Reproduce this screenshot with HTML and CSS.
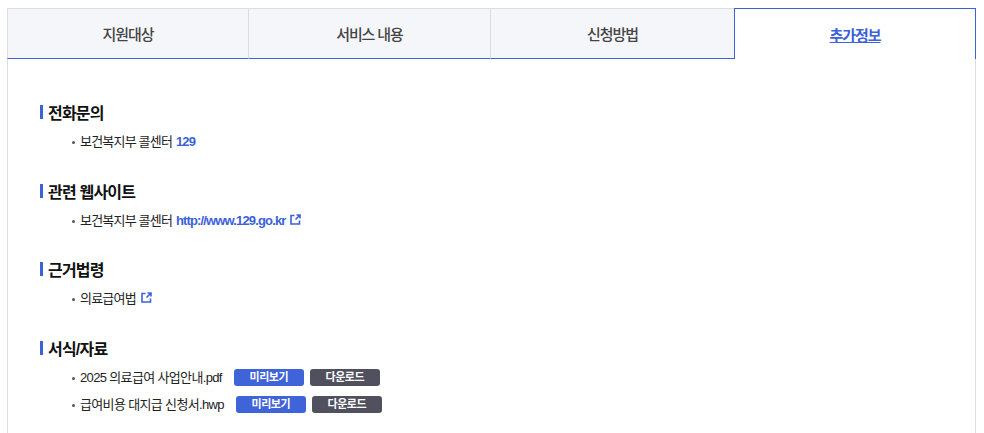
FILE: index.html
```html
<!DOCTYPE html>
<html lang="ko">
<head>
    <meta charset="UTF-8">
    <title>추가정보</title>
    <link rel="stylesheet" href="styles.css">
</head>
<body>
    <div class="container">
        <ul class="tabs">
            <li class="tab">지원대상</li>
            <li class="tab">서비스 내용</li>
            <li class="tab">신청방법</li>
            <li class="tab active"><a href="#">추가정보</a></li>
        </ul>
        <div class="panel">
            <h3>전화문의</h3>
            <ul class="items">
                <li>보건복지부 콜센터 <a class="link" href="#">129</a></li>
            </ul>

            <h3>관련 웹사이트</h3>
            <ul class="items">
                <li>보건복지부 콜센터 <a class="link" href="#">http://www.129.go.kr</a>
                    <svg class="ext" viewBox="0 0 11 11"><path d="M4.500 1.500H1v8.500h8.500V6.500M6.500 1H10v3.500M10 1 5.500 5.500"/></svg>
                </li>
            </ul>

            <h3>근거법령</h3>
            <ul class="items">
                <li>의료급여법
                    <svg class="ext" viewBox="0 0 11 11"><path d="M4.500 1.500H1v8.500h8.500V6.500M6.500 1H10v3.500M10 1 5.500 5.500"/></svg>
                </li>
            </ul>

            <h3>서식/자료</h3>
            <ul class="items files">
                <li>2025 의료급여 사업안내.pdf <span class="btn btn-view">미리보기</span><span class="btn btn-down">다운로드</span></li>
                <li>급여비용 대지급 신청서.hwp <span class="btn btn-view">미리보기</span><span class="btn btn-down">다운로드</span></li>
            </ul>
        </div>
    </div>
</body>
</html>
```

FILE: styles.css
```css
* {
    box-sizing: border-box;
}
html, body {
    height: 433px;
    overflow: hidden;
}
body {
    margin: 0;
    padding: 8px 8px 0 7px;
    background: #fff;
    color: #222;
    font-family: "Liberation Sans", "Noto Sans CJK KR", sans-serif;
    font-size: 13px;
    letter-spacing: -0.8px;
}
ul {
    list-style: none;
    margin: 0;
    padding: 0;
}
.tabs {
    display: grid;
    grid-template-columns: 241px 242px 244px 242px;
    height: 51px;
}
.tab {
    display: flex;
    align-items: center;
    justify-content: center;
    background: #f5f6fa;
    border-top: 1px solid #ddd;
    border-left: 1px solid #ddd;
    border-bottom: 1px solid #3b62d9;
    color: #444;
    font-size: 15px;
    font-weight: 500;
    letter-spacing: -1.1px;
}
.tab.active {
    background: #fff;
    border: 1px solid #3b62d9;
    border-bottom: none;
}
.tab.active a {
    color: #3b62d9;
    font-weight: 700;
}
.panel {
    height: 374px;
    padding: 43px 32px 0 32px;
    border-left: 1px solid #ddd;
    border-right: 1px solid #ddd;
}
h3 {
    position: relative;
    margin: 0 0 6px;
    padding-left: 8px;
    height: 20px;
    color: #111;
    font-size: 16px;
    font-weight: 700;
    line-height: 23px;
    letter-spacing: -0.8px;
}
h3::before {
    content: "";
    position: absolute;
    left: 0;
    top: 3px;
    width: 3px;
    height: 14px;
    background: #3b62d9;
}
.items {
    margin-bottom: 25.67px;
    padding-left: 40px;
}
.items li {
    position: relative;
    height: 27px;
    line-height: 27px;
}
.items.files li {
    letter-spacing: -0.65px;
}
.items li::before {
    content: "";
    position: absolute;
    left: -8px;
    top: 13px;
    width: 3px;
    height: 3px;
    background: #555;
    border-radius: 50%;
}
.link {
    margin-left: 1px;
    color: #3b62d9;
    font-weight: 700;
    letter-spacing: -0.85px;
    text-decoration: none;
}
.ext {
    width: 11px;
    height: 11px;
    margin-left: 2px;
    fill: none;
    stroke: #3b62d9;
    stroke-width: 1.600;
}
.btn {
    display: inline-block;
    width: 70px;
    height: 17px;
    margin-left: 6px;
    border-radius: 3px;
    color: #fff;
    font-size: 11px;
    font-weight: 700;
    line-height: 17px;
    text-align: center;
    vertical-align: 1px;
    letter-spacing: -0.5px;
}
.btn-view {
    margin-left: 9px;
    background: #3f63d8;
}
.btn-down {
    background: #50505f;
}
```
